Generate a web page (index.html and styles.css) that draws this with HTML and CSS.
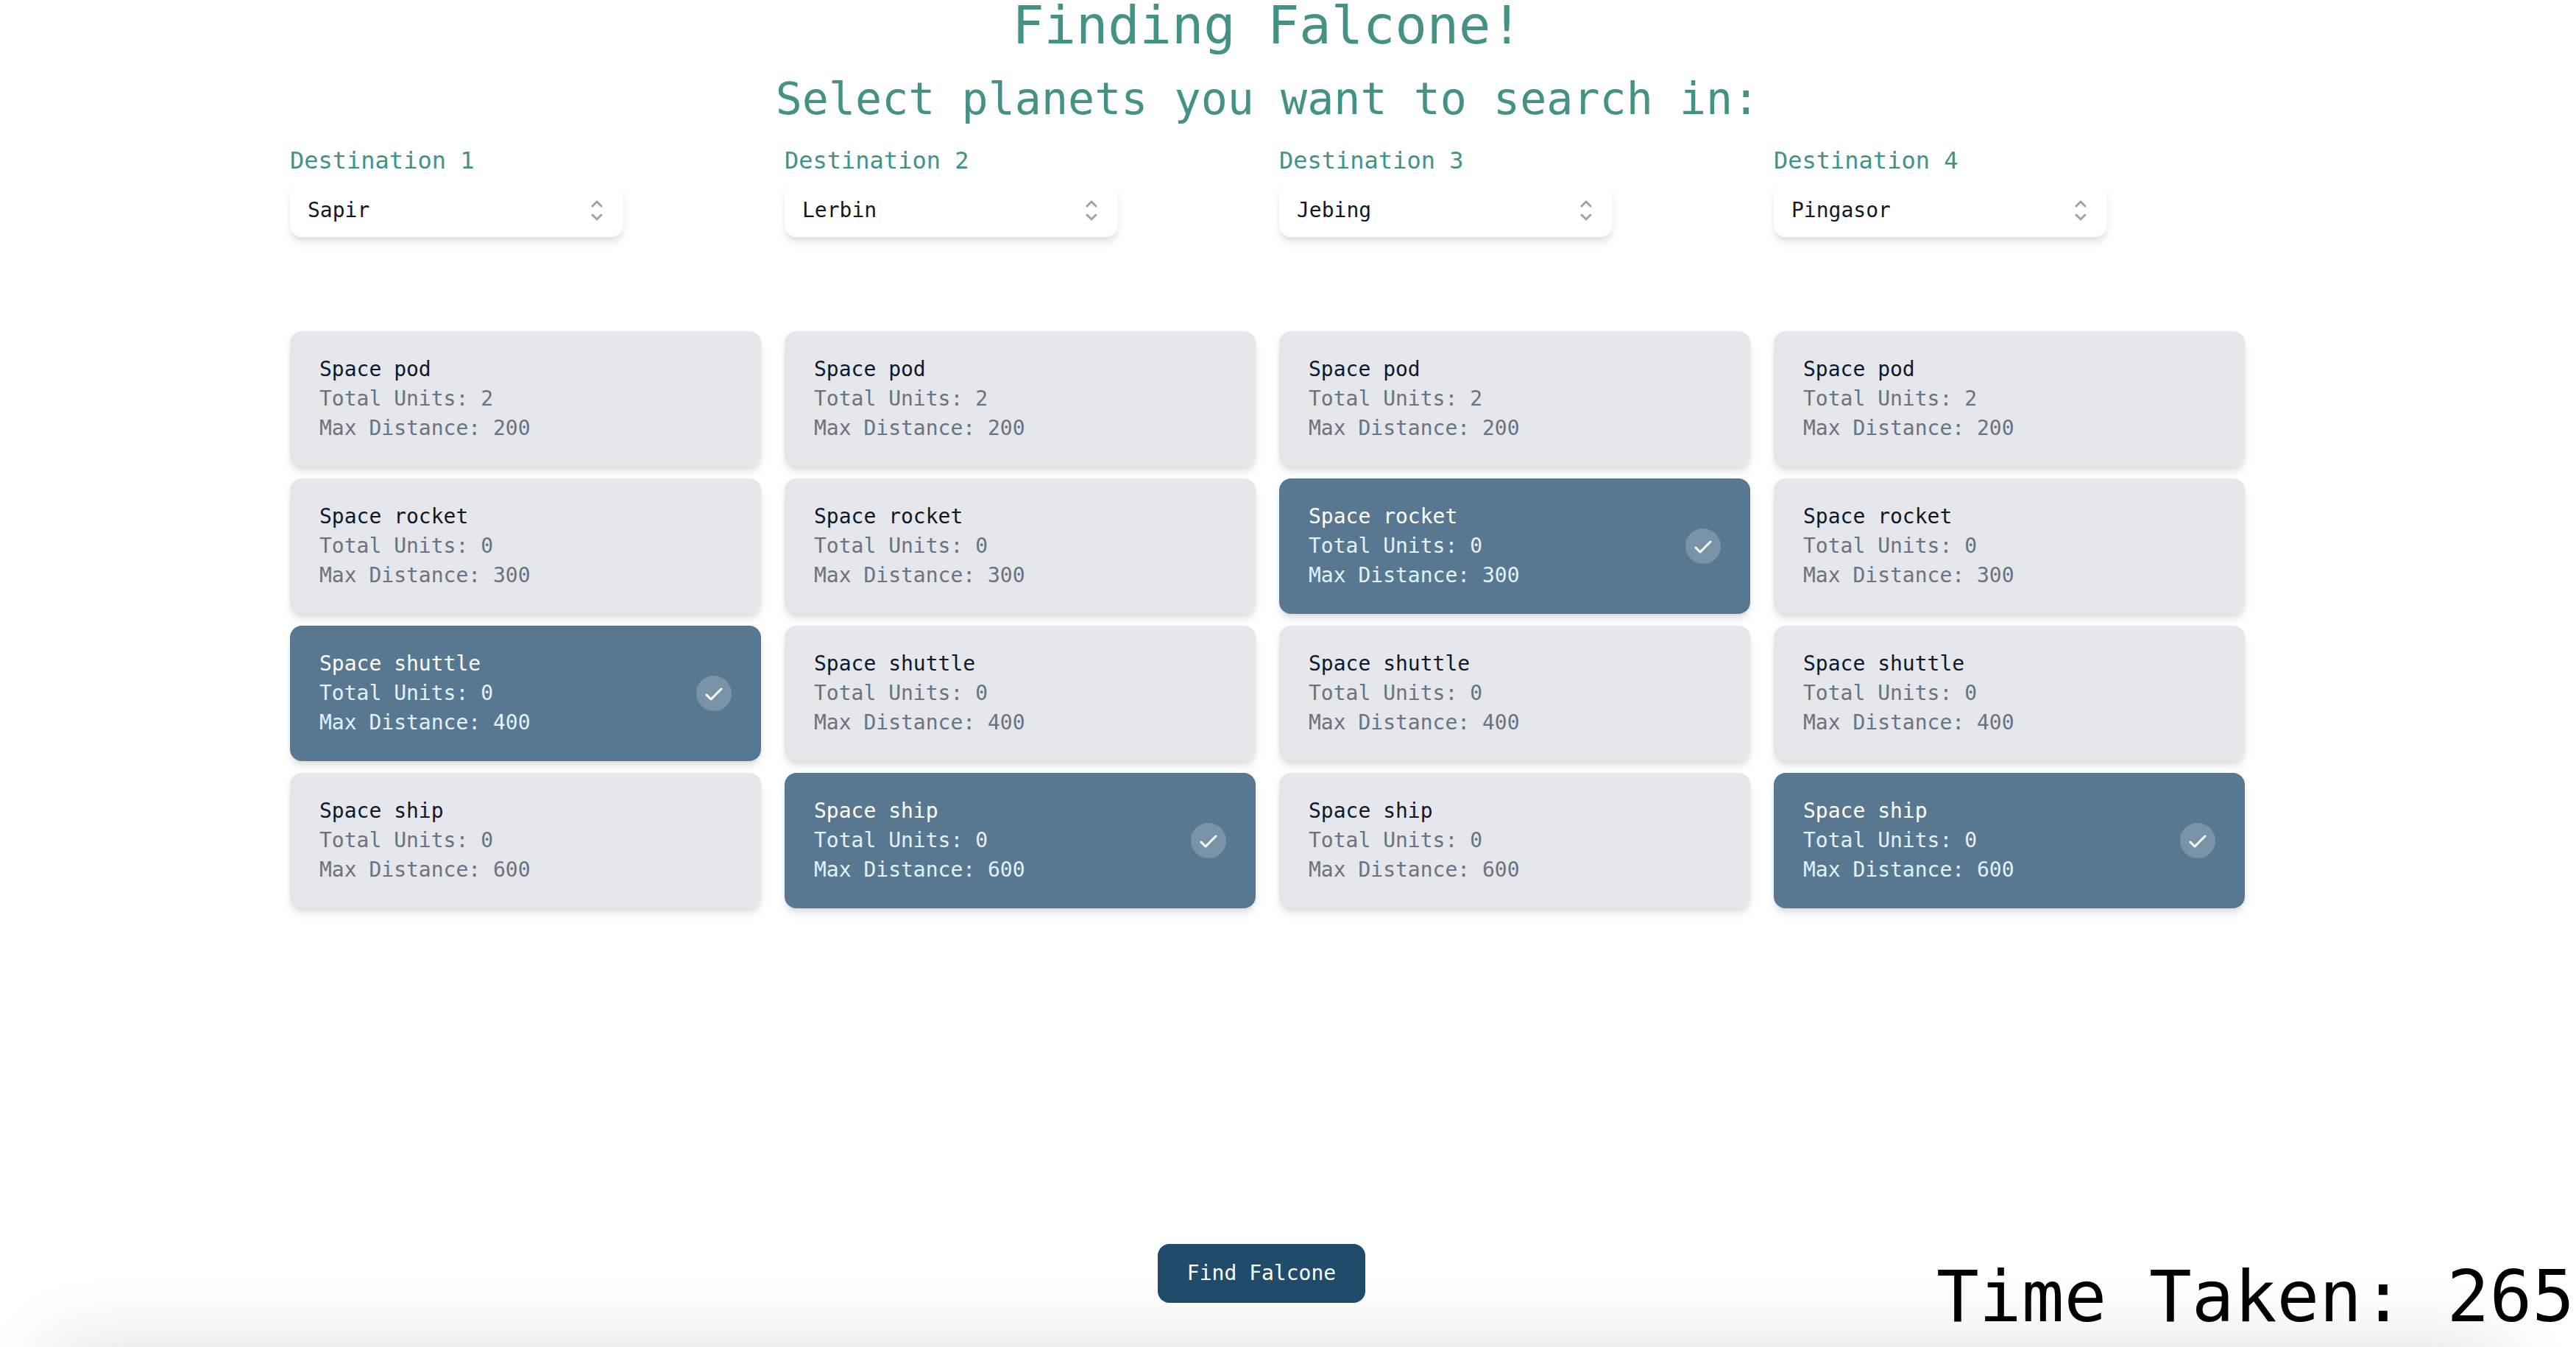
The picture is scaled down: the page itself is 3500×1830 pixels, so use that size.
FILE: index.html
```html
<!DOCTYPE html>
<html lang="en">
<head>
<meta charset="utf-8">
<title>Finding Falcone!</title>
<link rel="stylesheet" href="styles.css">
</head>
<body>
<div class="page">
  <main class="search">
    <h1 class="title">Finding Falcone!</h1>
    <h2 class="subtitle">Select planets you want to search in:</h2>
    <div class="destinations" id="destinations"></div>
  </main>
  <footer class="footer">
    <button class="find" type="button">Find Falcone</button>
    <p class="time">Time Taken: 265</p>
  </footer>
</div>
<script src="app.js"></script>
</body>
</html>
```
FILE: styles.css
```css
* {
  box-sizing: border-box;
}

body {
  margin: 0;
  background: #fefefe;
  color: #111827;
  font-family: "DejaVu Sans Mono", Menlo, monospace;
  font-size: 28px;
  line-height: 40px;
}

.page {
  display: flex;
  flex-direction: column;
  min-height: 100vh;
}

/* Soft shadow rising from the bottom edge */
.page::after {
  content: "";
  position: fixed;
  top: 100%;
  left: 70px;
  right: 100px;
  height: 200px;
  box-shadow: 0 0 100px rgba(0, 0, 0, 0.12);
  pointer-events: none;
}

.search {
  padding: 0 450px 0 394px;
}

.title,
.subtitle {
  margin: 0;
  color: #449286;
  font-weight: 400;
  text-align: center;
}

.title {
  font-size: 72px;
  line-height: 68px;
}

.subtitle {
  margin: 36px 0 30px;
  font-size: 60px;
  line-height: 60px;
}

.destinations {
  display: grid;
  grid-template-columns: repeat(4, minmax(0, 1fr));
  gap: 32px;
}

.label {
  display: block;
  margin-bottom: 8px;
  color: #449286;
  font-size: 32px;
  line-height: 48px;
}

.picker {
  position: relative;
  width: 453px;
  max-width: 100%;
  margin-bottom: 128px;
}

.select {
  appearance: none;
  display: block;
  width: 100%;
  height: 72px;
  padding: 16px 80px 16px 24px;
  border: 0;
  border-radius: 16px;
  background: #fff;
  color: inherit;
  font: inherit;
  box-shadow: 0 8px 12px -2px rgba(0, 0, 0, 0.1), 0 4px 8px -2px rgba(0, 0, 0, 0.06);
}

.chevrons {
  position: absolute;
  top: 16px;
  right: 16px;
  width: 40px;
  height: 40px;
  fill: none;
  stroke: #9ca3af;
  stroke-width: 1.5;
  stroke-linecap: round;
  stroke-linejoin: round;
  pointer-events: none;
}

.ships {
  display: flex;
  flex-direction: column;
  gap: 16px;
  margin: 0;
  padding: 0;
  border: 0;
}

.ship {
  display: flex;
  align-items: center;
  justify-content: space-between;
  padding: 32px 40px;
  border-radius: 16px;
  background: #e5e7eb;
  box-shadow: 0 8px 12px -2px rgba(0, 0, 0, 0.1), 0 4px 8px -2px rgba(0, 0, 0, 0.06);
  cursor: pointer;
}

.radio {
  position: absolute;
  opacity: 0;
  pointer-events: none;
}

.name,
.detail {
  display: block;
}

.detail {
  color: #6b7280;
}

.check {
  display: none;
  width: 48px;
  height: 48px;
  fill: none;
}

.ship:has(:checked) {
  background: #587891;
  color: #fff;
}

.ship:has(:checked) .detail {
  color: #e0f2fe;
}

.ship:has(:checked) .check {
  display: block;
}

.footer {
  display: grid;
  margin-top: auto;
}

.find,
.time {
  grid-area: 1 / 1;
}

.find {
  place-self: start center;
  height: 80px;
  margin-right: 72px;
  padding: 0 40px;
  border: 0;
  border-radius: 16px;
  background: #204b6b;
  color: #fff;
  font: inherit;
}

.time {
  justify-self: end;
  margin: 24px 2px 20px;
  color: #000;
  font-size: 96px;
  line-height: 96px;
}
```
FILE: app.js
```js
const planets = ["Sapir", "Lerbin", "Jebing", "Pingasor"];
const ships = [
  { name: "Space pod", units: 2, distance: 200 },
  { name: "Space rocket", units: 0, distance: 300 },
  { name: "Space shuttle", units: 0, distance: 400 },
  { name: "Space ship", units: 0, distance: 600 },
];
const chosen = [2, 3, 1, 3];

const shipCard = (ship, index, column) => `
  <label class="ship">
    <input class="radio" type="radio" name="ship-${column}" ${chosen[column] === index ? "checked" : ""}>
    <span>
      <span class="name">${ship.name}</span>
      <span class="detail">Total Units: ${ship.units}</span>
      <span class="detail">Max Distance: ${ship.distance}</span>
    </span>
    <svg class="check" viewBox="0 0 24 24" aria-hidden="true">
      <circle cx="12" cy="12" r="12" fill="#fff" opacity="0.2"/>
      <path d="M7 13l3 3 7-7" stroke="#fff" stroke-width="1.5" stroke-linecap="round" stroke-linejoin="round"/>
    </svg>
  </label>`;

document.getElementById("destinations").innerHTML = planets.map((planet, column) => `
  <section>
    <label class="label" for="planet-${column}">Destination ${column + 1}</label>
    <div class="picker">
      <select class="select" id="planet-${column}">
        ${planets.map((p) => `<option ${p === planet ? "selected" : ""}>${p}</option>`).join("")}
      </select>
      <svg class="chevrons" viewBox="0 0 20 20" aria-hidden="true">
        <path d="M7 7l3-3 3 3m0 6l-3 3-3-3"/>
      </svg>
    </div>
    <fieldset class="ships" aria-label="Vehicle for destination ${column + 1}">
      ${ships.map((ship, index) => shipCard(ship, index, column)).join("")}
    </fieldset>
  </section>`).join("");
```
